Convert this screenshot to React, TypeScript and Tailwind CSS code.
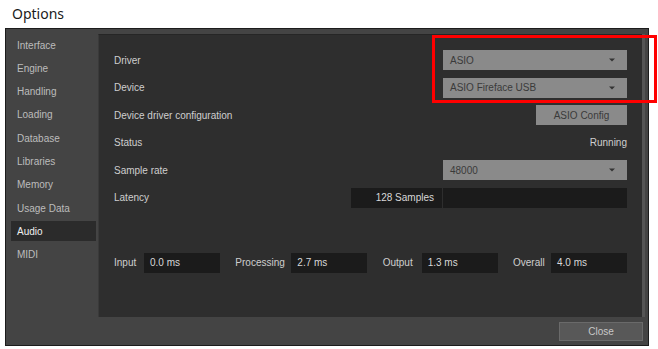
import React from "react";

const font = { fontFamily: '"Liberation Sans", Arial, sans-serif' };

function Arrow() {
  return (
    <svg width="6" height="4" viewBox="0 0 6 4" className="shrink-0">
      <path d="M0 0.5 L6 0.5 L3 3.5 Z" fill="#333333" />
    </svg>
  );
}

function Dropdown({ value }: { value: string }) {
  return (
    <div className="w-[184px] h-[20px] bg-[#8a8a8a] flex items-center justify-between pl-[7px] pr-[12px] text-[#3a3a3a] text-[10px]">
      <span>{value}</span>
      <Arrow />
    </div>
  );
}

function Row({ label, children }: { label: string; children?: React.ReactNode }) {
  return (
    <div className="h-[20px] flex items-center justify-between">
      <span className="text-[#cfcfcf] text-[10px]">{label}</span>
      {children}
    </div>
  );
}

function Stat({ label, value, labelW }: { label: string; value: string; labelW: string }) {
  return (
    <div className="flex items-center">
      <span className={`text-[#cfcfcf] text-[10px] ${labelW}`}>{label}</span>
      <div className="w-[76px] h-[20px] bg-[#1b1b1b] flex items-center pl-[6px] text-[#d8d8d8] text-[10px]">
        {value}
      </div>
    </div>
  );
}

const items = ["Interface", "Engine", "Handling", "Loading", "Database", "Libraries", "Memory", "Usage Data", "Audio", "MIDI"];

export default function App() {
  return (
    <div className="w-[658px] h-[349px] bg-white relative overflow-hidden" style={font}>
      <div className="h-[28px] pl-[12px] pt-[3px] text-[14px] text-[#1a1a1a]" style={{ fontFamily: '"Noto Sans", "Open Sans", sans-serif' }}>
        Options
      </div>
      <div className="ml-[5px] w-[644px] h-[318px] bg-[#444444] border border-[#1c1c1c] flex flex-col">
        <div className="flex h-[288px]">
          <div className="w-[92px] pt-[6px] pl-[5px] flex flex-col">
            {items.map((it) => (
              <div
                key={it}
                className={`h-[20px] mb-[3.3px] flex items-center pl-[6px] text-[10px] ${
                  it === "Audio" ? "bg-[#2b2b2b] text-[#f0f0f0] w-[85px]" : "text-[#bcbcbc]"
                }`}
              >
                {it}
              </div>
            ))}
          </div>
          <div className="mt-[5px] w-[544px] h-[283px] bg-[#2e2e2e] border-t border-[#262626] border-l border-l-[#3a3a3a] pl-[15px] pr-[15px] pt-[15px] flex flex-col">
            <div className="flex flex-col gap-[7.5px]">
              <Row label="Driver"><Dropdown value="ASIO" /></Row>
              <Row label="Device"><Dropdown value="ASIO Fireface USB" /></Row>
              <Row label="Device driver configuration">
                <div className="w-[91px] h-[20px] bg-[#8a8a8a] flex items-center justify-center text-[#3a3a3a] text-[10px]">ASIO Config</div>
              </Row>
              <Row label="Status"><span className="text-[#cfcfcf] text-[10px]">Running</span></Row>
              <Row label="Sample rate"><Dropdown value="48000" /></Row>
              <Row label="Latency">
                <div className="flex h-[20px]">
                  <div className="w-[91px] bg-[#1b1b1b] flex items-center justify-end pr-[8px] text-[#d8d8d8] text-[10px]">128 Samples</div>
                  <div className="w-[184px] ml-px bg-[#1b1b1b]"></div>
                </div>
              </Row>
            </div>
            <div className="mt-[45px] flex items-center justify-between">
              <Stat label="Input" value="0.0 ms" labelW="w-[30px]" />
              <Stat label="Processing" value="2.7 ms" labelW="w-[56px]" />
              <Stat label="Output" value="1.3 ms" labelW="w-[39px]" />
              <Stat label="Overall" value="4.0 ms" labelW="w-[38px]" />
            </div>
          </div>
          <div className="mt-[5px] w-[3px] h-[283px] bg-[#555555]"></div>
        </div>
        <div className="flex justify-end pr-[5px] pt-[5px]">
          <div className="w-[84px] h-[19px] bg-[#585858] border border-[#6a6a6a] flex items-center justify-center text-[#c8c8c8] text-[10px]">Close</div>
        </div>
      </div>
      <div className="absolute left-[432px] top-[35px] w-[225px] h-[68px] border-[3px] border-[#ff0000]"></div>
    </div>
  );
}
